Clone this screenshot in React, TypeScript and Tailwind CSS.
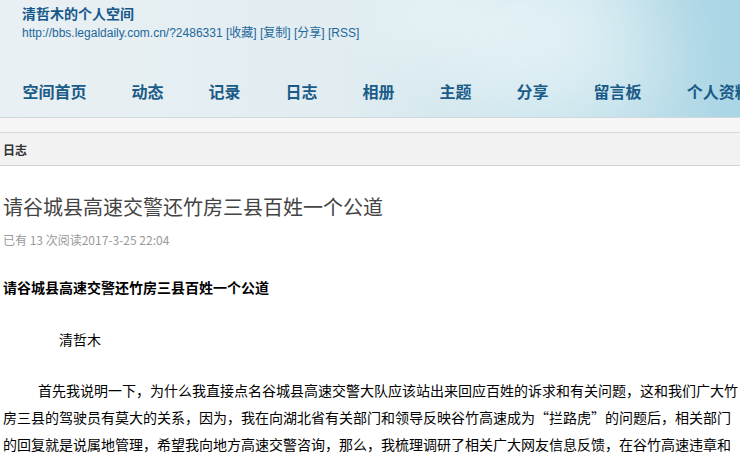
import React from "react";

const nav = ["空间首页", "动态", "记录", "日志", "相册", "主题", "分享", "留言板", "个人资料"];

const lines = [
  "首先我说明一下，为什么我直接点名谷城县高速交警大队应该站出来回应百姓的诉求和有关问题，这和我们广大竹",
  "房三县的驾驶员有莫大的关系，因为，我在向湖北省有关部门和领导反映谷竹高速成为“拦路虎”的问题后，相关部门",
  "的回复就是说属地管理，希望我向地方高速交警咨询，那么，我梳理调研了相关广大网友信息反馈，在谷竹高速违章和",
];

const App = () => {
  return (
    <div className="w-[740px] h-[459px] overflow-hidden bg-white font-['Microsoft_YaHei','Noto_Sans_CJK_SC',sans-serif]">
      <div className="relative h-[118px] overflow-hidden border-b border-[#cfd8dc] bg-[linear-gradient(90deg,#e9f0f3_0%,#e2edf1_45%,#c6e3ec_75%,#a9d5e5_100%)]">
        <div className="absolute left-[380px] top-[-30px] w-[260px] h-[90px] rounded-full bg-white/50 blur-2xl" />
        <div className="absolute left-[470px] top-[40px] w-[200px] h-[70px] rounded-full bg-white/40 blur-2xl" />
        <div className="relative pl-[22px] pt-[4px]">
          <div className="text-[14px] leading-[18px] font-bold text-[#17598a]">清哲木的个人空间</div>
          <div className="mt-[3px] text-[12px] leading-[16px] text-[#23679a] font-['Liberation_Sans','Noto_Sans_CJK_SC',sans-serif]">
            http://bbs.legaldaily.com.cn/?2486331 [收藏] [复制] [分享] [RSS]
          </div>
        </div>
        <div className="relative mt-[38px] flex whitespace-nowrap">
          {nav.map((n) => (
            <span key={n} className="px-[22.5px] text-[16px] leading-[24px] font-bold text-[#1a5b88]">
              {n}
            </span>
          ))}
        </div>
      </div>
      <div className="h-[15px] bg-[#f6f6f6] border-b border-[#d3d8db]" />
      <div className="h-[33px] bg-[#f2f2f2] border-b border-[#cdd3d6] flex items-center pl-[3px] pt-[1px]">
        <span className="text-[12px] font-bold text-[#333]">日志</span>
      </div>
      <div className="pl-[3px]">
        <h1 className="mt-[29px] text-[20px] leading-[24px] text-[#444] font-normal">
          请谷城县高速交警还竹房三县百姓一个公道
        </h1>
        <div className="mt-[13px] text-[12px] leading-[16px] text-[#999]">已有 13 次阅读2017-3-25 22:04</div>
        <div className="font-['SimSun','Noto_Sans_CJK_SC',sans-serif] text-[#000]">
          <div className="mt-[30px] text-[14px] leading-[18px] font-bold">请谷城县高速交警还竹房三县百姓一个公道</div>
          <div className="mt-[34px] pl-[56px] text-[14px] leading-[18px]">清哲木</div>
          <div className="mt-[29px] text-[14px] leading-[27px] whitespace-nowrap">
            {lines.map((l, i) => (
              <div key={i} className={i === 0 ? "pl-[35px]" : ""}>
                {l}
              </div>
            ))}
          </div>
        </div>
      </div>
    </div>
  );
};

export default App;
